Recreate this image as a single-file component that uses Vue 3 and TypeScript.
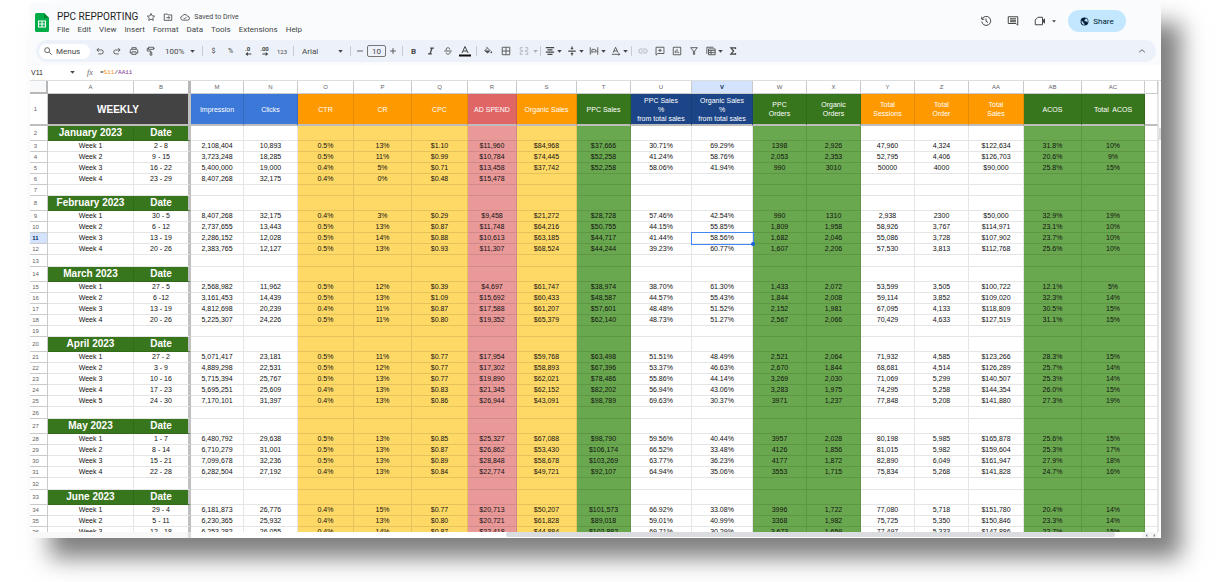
<script setup lang="ts">
import { ref } from 'vue'

type Tone = 'plain' | 'yellow' | 'pink' | 'green'
interface Column { id: string; title: string[]; head: string; tone: Tone; width: number }
interface Week { row: number; cells: string[] }
interface Month { row: number; name: string; weeks: Week[]; blank: boolean }

const columns: Column[] = [
  { id: 'M', title: ['Impression'], head: 'blue', tone: 'plain', width: 53 },
  { id: 'N', title: ['Clicks'], head: 'blue', tone: 'plain', width: 54 },
  { id: 'O', title: ['CTR'], head: 'orange', tone: 'yellow', width: 56 },
  { id: 'P', title: ['CR'], head: 'orange', tone: 'yellow', width: 58 },
  { id: 'Q', title: ['CPC'], head: 'orange', tone: 'yellow', width: 56 },
  { id: 'R', title: ['AD SPEND'], head: 'red', tone: 'pink', width: 49 },
  { id: 'S', title: ['Organic Sales'], head: 'orange', tone: 'yellow', width: 60 },
  { id: 'T', title: ['PPC Sales'], head: 'forest', tone: 'green', width: 54 },
  { id: 'U', title: ['PPC Sales', '%', 'from total sales'], head: 'navy', tone: 'plain', width: 61 },
  { id: 'V', title: ['Organic Sales', '%', 'from total sales'], head: 'navy', tone: 'plain', width: 61 },
  { id: 'W', title: ['PPC', 'Orders'], head: 'forest', tone: 'green', width: 54 },
  { id: 'X', title: ['Organic', 'Orders'], head: 'forest', tone: 'green', width: 54 },
  { id: 'Y', title: ['Total', 'Sessions'], head: 'orange', tone: 'plain', width: 54 },
  { id: 'Z', title: ['Total', 'Order'], head: 'orange', tone: 'plain', width: 54 },
  { id: 'AA', title: ['Total', 'Sales'], head: 'orange', tone: 'plain', width: 55 },
  { id: 'AB', title: ['ACOS'], head: 'forest', tone: 'green', width: 58 },
  { id: 'AC', title: ['Total\u00a0 ACOS'], head: 'forest', tone: 'green', width: 63 },
]

function month(row: number, name: string, lines: string[], blank = true): Month {
  return { row, name, blank, weeks: lines.map((line, i) => ({ row: row + 1 + i, cells: line.split('|') })) }
}

const months: Month[] = [
  month(2, 'January 2023', [
    '2 - 8|2,108,404|10,893|0.5%|13%|$1.10|$11,960|$84,968|$37,666|30.71%|69.29%|1398|2,926|47,960|4,324|$122,634|31.8%|10%',
    '9 - 15|3,723,248|18,285|0.5%|11%|$0.99|$10,784|$74,445|$52,258|41.24%|58.76%|2,053|2,353|52,795|4,406|$126,703|20.6%|9%',
    '16 - 22|5,400,000|19,000|0.4%|5%|$0.71|$13,458|$37,742|$52,258|58.06%|41.94%|990|3010|50000|4000|$90,000|25.8%|15%',
    '23 - 29|8,407,268|32,175|0.4%|0%|$0.48|$15,478|||||||||||',
  ]),
  month(8, 'February 2023', [
    '30 - 5|8,407,268|32,175|0.4%|3%|$0.29|$9,458|$21,272|$28,728|57.46%|42.54%|990|1310|2,938|2300|$50,000|32.9%|19%',
    '6 - 12|2,737,655|13,443|0.5%|13%|$0.87|$11,748|$64,216|$50,755|44.15%|55.85%|1,809|1,958|58,926|3,767|$114,971|23.1%|10%',
    '13 - 19|2,286,152|12,028|0.5%|14%|$0.88|$10,613|$63,185|$44,717|41.44%|58.56%|1,682|2,046|55,086|3,728|$107,902|23.7%|10%',
    '20 - 26|2,383,765|12,127|0.5%|13%|$0.93|$11,307|$68,524|$44,244|39.23%|60.77%|1,607|2,206|57,530|3,813|$112,768|25.6%|10%',
  ]),
  month(14, 'March 2023', [
    '27 - 5|2,568,982|11,962|0.5%|12%|$0.39|$4,697|$61,747|$38,974|38.70%|61.30%|1,433|2,072|53,599|3,505|$100,722|12.1%|5%',
    '6 -12|3,161,453|14,439|0.5%|13%|$1.09|$15,692|$60,433|$48,587|44.57%|55.43%|1,844|2,008|59,114|3,852|$109,020|32.3%|14%',
    '13 - 19|4,812,698|20,239|0.4%|11%|$0.87|$17,588|$61,207|$57,601|48.48%|51.52%|2,152|1,981|67,095|4,133|$118,809|30.5%|15%',
    '20 - 26|5,225,307|24,226|0.5%|11%|$0.80|$19,352|$65,379|$62,140|48.73%|51.27%|2,567|2,066|70,429|4,633|$127,519|31.1%|15%',
  ]),
  month(20, 'April 2023', [
    '27 - 2|5,071,417|23,181|0.5%|11%|$0.77|$17,954|$59,768|$63,498|51.51%|48.49%|2,521|2,064|71,932|4,585|$123,266|28.3%|15%',
    '3 - 9|4,889,298|22,531|0.5%|12%|$0.77|$17,302|$58,893|$67,396|53.37%|46.63%|2,670|1,844|68,681|4,514|$126,289|25.7%|14%',
    '10 - 16|5,715,394|25,767|0.5%|13%|$0.77|$19,890|$62,021|$78,486|55.86%|44.14%|3,269|2,030|71,069|5,299|$140,507|25.3%|14%',
    '17 - 23|5,695,251|25,609|0.4%|13%|$0.83|$21,345|$62,152|$82,202|56.94%|43.06%|3,283|1,975|74,295|5,258|$144,354|26.0%|15%',
    '24 - 30|7,170,101|31,397|0.4%|13%|$0.86|$26,944|$43,091|$98,789|69.63%|30.37%|3971|1,237|77,848|5,208|$141,880|27.3%|19%',
  ]),
  month(27, 'May 2023', [
    '1 - 7|6,480,792|29,638|0.5%|13%|$0.85|$25,327|$67,088|$98,790|59.56%|40.44%|3957|2,028|80,198|5,985|$165,878|25.6%|15%',
    '8 - 14|6,710,279|31,001|0.5%|13%|$0.87|$26,862|$53,430|$106,174|66.52%|33.48%|4126|1,856|81,015|5,982|$159,604|25.3%|17%',
    '15 - 21|7,099,678|32,236|0.5%|13%|$0.89|$28,848|$58,678|$103,269|63.77%|36.23%|4177|1,872|82,890|6,049|$161,947|27.9%|18%',
    '22 - 28|6,282,504|27,192|0.4%|13%|$0.84|$22,774|$49,721|$92,107|64.94%|35.06%|3553|1,715|75,834|5,268|$141,828|24.7%|16%',
  ]),
  month(33, 'June 2023', [
    '29 - 4|6,181,873|26,776|0.4%|15%|$0.77|$20,713|$50,207|$101,573|66.92%|33.08%|3996|1,722|77,080|5,718|$151,780|20.4%|14%',
    '5 - 11|6,230,365|25,932|0.4%|13%|$0.80|$20,721|$61,828|$89,018|59.01%|40.99%|3368|1,982|75,725|5,350|$150,846|23.3%|14%',
    '12 - 18|6,253,282|26,055|0.4%|14%|$0.87|$22,418|$44,884|$102,882|69.71%|30.29%|3,673|1,659|77,497|5,333|$147,886|22.7%|15%',
  ], false),
]

const menus = ['File', 'Edit', 'View', 'Insert', 'Format', 'Data', 'Tools', 'Extensions', 'Help']
const zoom = ref('100%')
const font = ref('Arial')
const size = ref('10')
const cellName = ref('V11')
const search = ref('')
const selected = { row: 11, col: 'V' }
</script>

<template>
  <div class="stage">
    <main class="window">
      <header class="top">
        <svg class="logo" viewBox="0 0 14 19" aria-hidden="true">
          <path d="M1.500 0H9l5 5v12.500a1.500 1.500 0 0 1-1.500 1.500h-11A1.500 1.500 0 0 1 0 17.500v-16A1.500 1.500 0 0 1 1.500 0z" fill="#00ac47" />
          <path d="M9 0l5 5H9z" fill="#00832d" />
          <path d="M3.500 8h7v6h-7zM3.500 11h7M7 8v6" fill="none" stroke="#fff" stroke-width="1.100" />
        </svg>
        <div class="doc">
          <div class="title-row">
            <h1>PPC REPPORTING</h1>
            <button class="mini" aria-label="Star">
              <svg viewBox="0 0 24 24"><path class="s" d="M12 3.500l2.600 5.700 6.200.7-4.600 4.200 1.300 6.100-5.500-3.100-5.500 3.100 1.300-6.100-4.600-4.200 6.200-.7z" /></svg>
            </button>
            <button class="mini" aria-label="Move">
              <svg viewBox="0 0 24 24"><path class="s" d="M3 5h7l2 2h9v13H3zM8 13.500h8M13 10l3.500 3.500L13 17" /></svg>
            </button>
            <span class="saved">
              <svg viewBox="0 0 24 24"><path class="s" d="M18.500 19.500h-12a5 5 0 0 1-.8-9.900A6.600 6.600 0 0 1 18 10.500a4.500 4.500 0 0 1 .5 9zM8.500 14l2.500 2.500 4.500-4.500" /></svg>
              Saved to Drive
            </span>
          </div>
          <nav class="menus">
            <button v-for="m in menus" :key="m">{{ m }}</button>
          </nav>
        </div>
        <div class="actions">
          <button aria-label="Version history">
            <svg viewBox="0 0 24 24"><path class="s" d="M4.500 7.500A9 9 0 1 1 3.500 13M3.500 3.500v5h5M12 7v5.500l4 2.500" /></svg>
          </button>
          <button aria-label="Comments">
            <svg viewBox="0 0 24 24"><path class="s" d="M2.500 3.500h19v17l-3.500-3.500H2.500z" /><path class="s" d="M6 7.500h12M6 10.500h12M6 13.500h12" /></svg>
          </button>
          <button class="meet" aria-label="Join a call">
            <svg viewBox="0 0 24 24"><path class="s" d="M8 4.500h9v15H2.500V10z" /><path d="M17 10.500l5-4v11l-5-4z" /></svg>
            <svg class="caret" viewBox="0 0 6 4"><path d="M0 0h6L3 3.500z" /></svg>
          </button>
          <button class="share">
            <svg viewBox="0 0 24 24"><circle cx="12" cy="12" r="10.500" /><path d="M4 9l5 5v2l3 2v3.500c-5-.5-8.500-5-8-10zM15 3.500v2.500l-3 2v3h5l2 4c3-4 2-9-2-11z" fill="#c2e7ff" /></svg>
            Share
          </button>
        </div>
      </header>

      <div class="toolbar" role="toolbar" aria-label="Formatting">
        <label class="search">
          <svg viewBox="0 0 24 24"><path class="s" d="M15 15l6 6" /><circle class="s" cx="10" cy="10" r="6" /></svg>
          <input v-model="search" placeholder="Menus" aria-label="Search the menus" />
        </label>
        <button aria-label="Undo"><svg viewBox="0 0 24 24"><path class="s" d="M8 19h7a4.500 4.500 0 0 0 0-9.500H5M9 5L4.500 9.500 9 14" /></svg></button>
        <button aria-label="Redo"><svg viewBox="0 0 24 24"><path class="s" d="M16 19H9a4.500 4.500 0 0 1 0-9.500h10M15 5l4.500 4.500L15 14" /></svg></button>
        <button aria-label="Print"><svg viewBox="0 0 24 24"><path class="s" d="M7 8V4h10v4M6 17H3V11a3 3 0 0 1 3-3h12a3 3 0 0 1 3 3v6h-3M7 14h10v6H7z" /></svg></button>
        <button aria-label="Paint format"><svg viewBox="0 0 24 24"><path class="s" d="M6 3h12v5H6zM6 5.500H3V12h9v4M10 16h4v6h-4zM18 5.500h3" /></svg></button>
        <span class="picker zoom">
          <select v-model="zoom" aria-label="Zoom"><option>100%</option><option>75%</option></select>
          <svg class="caret" viewBox="0 0 6 4"><path d="M0 0h6L3 3.500z" /></svg>
        </span>
        <i class="rule"></i>
        <button class="word" aria-label="Currency">$</button>
        <button class="word" aria-label="Percent">%</button>
        <button class="dec" aria-label="Fewer decimals">.0<svg viewBox="0 0 12 6"><path d="M11 2.300v1.400H6V6L2 3l4-3v2.300z" /></svg></button>
        <button class="dec" aria-label="More decimals">.00<svg viewBox="0 0 12 6"><path d="M2 2.300v1.400h5V6l4-3-4-3v2.300z" /></svg></button>
        <button class="more-formats">123</button>
        <i class="rule"></i>
        <span class="picker font">
          <select v-model="font" aria-label="Font"><option>Arial</option><option>Roboto</option></select>
          <svg class="caret" viewBox="0 0 6 4"><path d="M0 0h6L3 3.500z" /></svg>
        </span>
        <i class="rule"></i>
        <button class="step" aria-label="Smaller"><svg viewBox="0 0 24 24"><path class="s" d="M5 12h14" /></svg></button>
        <input v-model="size" class="size" aria-label="Font size" />
        <button class="step" aria-label="Larger"><svg viewBox="0 0 24 24"><path class="s" d="M5 12h14M12 5v14" /></svg></button>
        <i class="rule"></i>
        <button aria-label="Bold"><b>B</b></button>
        <button aria-label="Italic"><svg viewBox="0 0 24 24"><path class="h" d="M10 5h9M5 19h9M14.500 5l-5 14" /></svg></button>
        <button aria-label="Strikethrough"><svg viewBox="0 0 24 24"><path class="s" d="M3 12h18M16.500 8c0-5-9-5-9-.5 0 1.500 1 2.500 2 3M7.500 16c0 5 9.500 5 9.500 0 0-.7-.2-1.500-.7-2" /></svg></button>
        <button class="color" aria-label="Text color"><svg viewBox="0 0 24 24"><path class="s" d="M6 16l6-13 6 13M8 12h8" /><path d="M0 19h24v4H0z" fill="#111" /></svg></button>
        <i class="rule"></i>
        <button class="wide" aria-label="Fill color"><svg viewBox="0 0 24 24"><path class="s" d="M8 2l9 9-6 6-7-6 7-6" /><path d="M4 11h13l-6 6zM20 12c3 4 2 5.500 0 5.500s-3-1.500 0-5.500z" /></svg></button>
        <button class="wide" aria-label="Borders"><svg viewBox="0 0 24 24"><path class="s" d="M3 3h18v18H3zM12 3v18M3 12h18" /></svg></button>
        <button class="dim" aria-label="Merge cells"><svg viewBox="0 0 24 24"><path class="s" d="M9 4H3v5M15 4h6v5M9 20H3v-5M15 20h6v-5M2 12h7M22 12h-7M6 9l3 3-3 3M18 9l-3 3 3 3" /></svg></button>
        <button class="drop dim" aria-label="Merge options"><svg class="caret" viewBox="0 0 6 4"><path d="M0 0h6L3 3.500z" /></svg></button>
        <i class="rule"></i>
        <div class="groups">
          <button class="pair" aria-label="Horizontal align"><svg viewBox="0 0 24 24"><path class="h" d="M2 4h20M6 9.300h12M2 14.600h20M6 20h12" /></svg><svg class="caret" viewBox="0 0 6 4"><path d="M0 0h6L3 3.500z" /></svg></button>
          <button class="pair" aria-label="Vertical align"><svg viewBox="0 0 24 24"><path class="h" d="M3 12h18M12 1v5M12 23v-5" /><path d="M8 5h8l-4 4zM8 19h8l-4-4z" /></svg><svg class="caret" viewBox="0 0 6 4"><path d="M0 0h6L3 3.500z" /></svg></button>
          <button class="pair" aria-label="Text wrapping"><svg viewBox="0 0 24 24"><path class="s" d="M3 3v18M21 3v18M7 17V8h6a3 3 0 0 1 0 6H8M16 10l3 3-3 3" /></svg><svg class="caret" viewBox="0 0 6 4"><path d="M0 0h6L3 3.500z" /></svg></button>
          <button class="pair" aria-label="Text rotation"><svg viewBox="0 0 24 24"><path class="s" d="M5 16l6-13 6 13M7 12h8M2 20h19M18 17l3 3-3 3" /></svg><svg class="caret" viewBox="0 0 6 4"><path d="M0 0h6L3 3.500z" /></svg></button>
        </div>
        <i class="rule"></i>
        <button class="dim" aria-label="Insert link"><svg viewBox="0 0 24 24"><path class="s" d="M11 7H7a5 5 0 0 0 0 10h4M13 7h4a5 5 0 0 1 0 10h-4M8 12h8" /></svg></button>
        <button aria-label="Insert comment"><svg viewBox="0 0 24 24"><path class="s" d="M2.500 3h19v15H7l-4.500 4zM12 6.500v8M8 10.500h8" /></svg></button>
        <button aria-label="Insert chart"><svg viewBox="0 0 24 24"><path class="s" d="M3 3h18v18H3zM8 17v-6M12 17V7M16 17v-3" /></svg></button>
        <button aria-label="Filter"><svg viewBox="0 0 24 24"><path class="s" d="M4 4h16l-6.500 8v8h-3v-8z" /></svg></button>
        <button class="pair views" aria-label="Filter views"><svg viewBox="0 0 24 24"><path class="s" d="M2 19V3h16M6 7h16v14H6zM6 11h16M6 16h16M12 11v10" /></svg><svg class="caret" viewBox="0 0 6 4"><path d="M0 0h6L3 3.500z" /></svg></button>
        <button aria-label="Functions"><svg viewBox="0 0 24 24"><path class="h" d="M18 7V4.500H7l6.500 7.500L7 19.500h11V17" /></svg></button>
        <button class="collapse" aria-label="Hide the menus"><svg viewBox="0 0 24 24"><path class="s" d="M5 15l7-6 7 6" /></svg></button>
      </div>

      <div class="formula">
        <input v-model="cellName" class="name-box" aria-label="Name box" />
        <svg class="caret" viewBox="0 0 6 4"><path d="M0 0h6L3 3.500z" /></svg>
        <span class="fx">fx</span>
        <code>=<span class="ref-a">S11</span>/<span class="ref-b">AA11</span></code>
      </div>

      <div class="body">
        <div class="grid">
          <table>
            <colgroup>
              <col class="c-num" /><col class="c-a" /><col class="c-b" />
              <col v-for="c in columns" :key="c.id" :style="{ width: c.width + 'px' }" />
              <col class="c-end" />
            </colgroup>
            <thead>
              <tr class="letters">
                <th class="corner"></th>
                <th>A</th>
                <th class="edge">B</th>
                <th v-for="c in columns" :key="c.id" :class="{ current: c.id === selected.col }">{{ c.id }}</th>
                <th></th>
              </tr>
              <tr class="titles">
                <th class="num">1</th>
                <th class="weekly edge" colspan="2">WEEKLY</th>
                <th v-for="c in columns" :key="c.id" :class="c.head">
                  <div v-for="line in c.title" :key="line">{{ line }}</div>
                </th>
                <th></th>
              </tr>
            </thead>
            <tbody v-for="m in months" :key="m.row">
              <tr class="month">
                <th class="num">{{ m.row }}</th>
                <th class="forest">{{ m.name }}</th>
                <th class="forest edge">Date</th>
                <td v-for="c in columns" :key="c.id" :class="c.tone"></td>
                <td></td>
              </tr>
              <tr v-for="(w, i) in m.weeks" :key="w.row">
                <th class="num" :class="{ current: w.row === selected.row }">{{ w.row }}</th>
                <td>Week {{ i + 1 }}</td>
                <td class="edge">{{ w.cells[0] }}</td>
                <td
                  v-for="(c, j) in columns"
                  :key="c.id"
                  :class="[c.tone, { active: w.row === selected.row && c.id === selected.col }]"
                >{{ w.cells[j + 1] }}</td>
                <td></td>
              </tr>
              <tr v-if="m.blank" class="blank">
                <th class="num">{{ m.row + m.weeks.length + 1 }}</th>
                <td></td>
                <td class="edge"></td>
                <td v-for="c in columns" :key="c.id" :class="c.tone"></td>
                <td></td>
              </tr>
            </tbody>
          </table>
        </div>
        <div class="v-scroll"><div class="v-thumb"></div></div>
      </div>

      <footer class="h-scroll">
        <div class="frozen"></div>
        <div class="track"><div class="thumb"></div></div>
        <button aria-label="Scroll left"><svg viewBox="0 0 6 6"><path d="M4 1v4L2 3z" /></svg></button>
        <button aria-label="Scroll right"><svg viewBox="0 0 6 6"><path d="M2 1v4l2-2z" /></svg></button>
      </footer>
    </main>
  </div>
</template>

<style>
body { margin: 0; background: #fff; overflow: hidden; }
</style>

<style scoped>
* { box-sizing: border-box; }
.stage { height: 100vh; padding: 3px 69px 44px 30px; font-family: Roboto, "Liberation Sans", sans-serif; color: #444746; }
.window { height: 100%; display: flex; flex-direction: column; background: #f9fbfd; box-shadow: 20px 20px 22px rgba(0, 0, 0, 0.5); }
button, input, select { font: inherit; color: inherit; border: 0; background: none; padding: 0; margin: 0; outline: 0; appearance: none; }
button { display: flex; align-items: center; justify-content: center; }
svg { display: block; flex: none; fill: currentColor; }
svg .s { fill: none; stroke: currentColor; stroke-width: 2; }
svg .h { fill: none; stroke: currentColor; stroke-width: 3; }
svg.caret { width: 5px; height: 3px; }

.top { height: 37px; flex: none; display: flex; padding-left: 5px; }
.logo { width: 14px; height: 19px; margin-top: 10px; }
.doc { margin-left: 8px; padding-top: 7px; }
.title-row { display: flex; align-items: center; height: 13px; }
h1 { margin: 0 8px 0 0; font-size: 10px; line-height: 13px; font-weight: 400; color: #1f1f1f; white-space: nowrap; }
.mini { width: 10px; height: 10px; margin-right: 7px; }
.mini svg, .saved svg { width: 10px; height: 10px; }
.saved { display: flex; align-items: center; gap: 4px; font-size: 7px; white-space: nowrap; }
.menus { display: flex; gap: 8px; height: 13px; font-size: 8px; }
.actions { margin-left: auto; display: flex; align-items: center; gap: 15px; height: 22px; margin-top: 7px; padding-right: 35px; }
.actions svg { width: 12px; height: 12px; }
.meet { gap: 6px; }
.actions svg.caret { width: 4px; height: 3px; }
.share { width: 58px; height: 22px; margin-left: -3px; gap: 4px; border-radius: 11px; background: #c2e7ff; color: #001d35; font-size: 8px; }
.share svg { width: 9px; height: 9px; }

.toolbar { flex: none; height: 22px; margin: 0 5px 3px 6px; padding: 0 6px 0 3px; display: flex; align-items: center; border-radius: 11px; background: #edf2fa; font-size: 8px; }
.toolbar button { width: 17px; height: 16px; flex: none; }
.toolbar svg { width: 10px; height: 10px; }
.toolbar svg.caret { width: 5px; height: 3px; }
.search { width: 51px; height: 15px; margin-right: 1px; padding-left: 4px; display: flex; align-items: center; gap: 3px; border-radius: 8px; background: #fff; }
.search input { width: 30px; }
.search input::placeholder { color: #444746; opacity: 1; }
.picker { display: flex; align-items: center; justify-content: space-between; padding: 0 5px 0 6px; }
.picker select { flex: 1; min-width: 0; }
.zoom { width: 41px; }
.toolbar .picker.font { width: 52px; }
.rule { width: 1px; height: 10px; margin: 0 2px; background: #c7cbd1; flex: none; }
.word { font-size: 7px; }
.toolbar .dec { flex-direction: column; font-size: 6px; line-height: 6px; font-weight: 700; }
.toolbar .dec svg { width: 8px; height: 4px; }
.toolbar .more-formats { width: 18px; font-size: 6px; }
.toolbar .step { width: 14px; }
.size { width: 19px; height: 12px; border: 1px solid #747775; border-radius: 2px; text-align: center; }
.toolbar .color, .toolbar .wide { width: 18px; }
.toolbar .color svg { width: 12px; height: 12px; }
.dim { opacity: 0.4; }
.toolbar .drop { width: 6px; }
.groups { display: flex; gap: 2px; }
.toolbar .pair { width: 20px; gap: 2px; }
.toolbar .views { margin-left: 2px; }
.toolbar .collapse { margin-left: auto; }

.formula { flex: none; height: 16px; display: flex; align-items: center; background: #fff; border-bottom: 1px solid #dcdedf; }
.name-box { width: 40px; padding-left: 1px; font: 7px "Liberation Sans", sans-serif; color: #1f1f1f; }
.fx { margin-left: 12px; width: 13px; font: italic 8px "Liberation Serif", serif; color: #5f6368; }
code { font: 6px "Liberation Mono", monospace; color: #1f1f1f; }
.ref-a { color: #f7981d; }
.ref-b { color: #7e3794; }

.body { flex: 1; min-height: 0; display: flex; background: #fff; }
.grid { flex: 1; min-width: 0; overflow: hidden; }
table { width: 100%; table-layout: fixed; border-collapse: separate; border-spacing: 0; font: 7px/10px "Liberation Sans", sans-serif; color: #111; text-align: center; }
.c-num { width: 18px; }
.c-a { width: 86px; }
.c-b { width: 57px; }
.c-end { width: 13px; }
th, td { height: 11px; padding: 0; border: 0 solid rgba(0, 0, 0, 0.1); border-width: 0 1px 1px 0; white-space: nowrap; font-weight: 400; vertical-align: middle; }
th.edge, td.edge { border-right: 3px solid #c0c0c0; }
.letters th { height: 13px; font-size: 6px; color: #5f6368; border-color: #c8cacb; }
.letters th.edge { border-right-color: #b7b7b7; }
.letters th.corner { border-width: 0 2px 2px 0; border-color: #b7b7b7; background: #f8f9fa; }
.num { padding-right: 6px; font-size: 6px; color: #5f6368; border-color: #c8cacb; }
.letters th.current, .num.current { background: #d3e3fd; color: #0b2a5c; font-weight: 700; }
.titles th { height: 32px; border-bottom: 2px solid #bdbdbd; color: #fff; line-height: 9px; }
.titles th.num { color: #5f6368; }
.titles .weekly { background-color: #434343; font-size: 10px; font-weight: 700; }
.blue { background-color: #3c78d8; }
.orange { background-color: #ff9900; }
.red { background-color: #e06666; }
.forest { background-color: #38761d; }
.navy { background-color: #1c4587; }
.month th, .month td { height: 15px; line-height: 14px; }
.month .forest { color: #fff; font-size: 10px; font-weight: 700; }
.yellow { background: #ffd966; }
.pink { background: #ea9999; }
.green { background: #6aa84f; }
tbody:nth-of-type(2) .blank td, tbody:nth-of-type(n + 4) .blank td { height: 12px; }
.active { position: relative; outline: 1px solid #4285f4; }
.active::after { content: ""; position: absolute; right: -3px; bottom: -3px; width: 4px; height: 4px; border-radius: 50%; background: #1a63e0; }
.v-scroll { width: 3px; padding-top: 47px; border-left: 1px solid #e4e6e8; background: #fff; }
.v-thumb { height: 12px; background: #dadce0; }

.h-scroll { flex: none; height: 6px; display: flex; background: #fff; }
.frozen { width: 161px; border-right: 3px solid #dadce0; background: #f8f8f8; }
.track { flex: 1; display: flex; }
.thumb { width: 64%; height: 5px; margin-left: auto; margin-right: 27px; border-radius: 3px; background: #dadce0; }
.h-scroll button { width: 8px; background: #f4f5f6; color: #80868b; }
.h-scroll button:last-child { margin-right: 3px; }
.h-scroll button svg { width: 5px; height: 5px; }
</style>
